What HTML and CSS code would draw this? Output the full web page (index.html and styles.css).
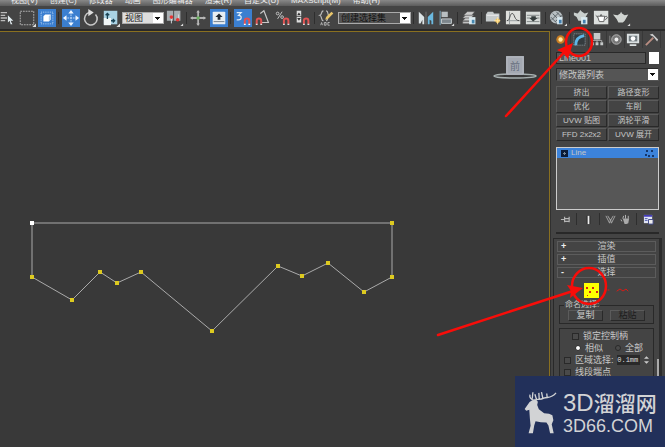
FILE: index.html
```
<!DOCTYPE html>
<html lang="zh-CN">
<head>
<meta charset="utf-8">
<title>3ds Max</title>
<link rel="stylesheet" href="styles.css">
</head>
<body>
<div class="app">
  <nav class="menu">
    <a href="#">视图(V)</a><a href="#">创建(C)</a><a href="#">修改器</a><a href="#">动画</a><a href="#">图形编辑器</a><a href="#">渲染(R)</a><a href="#">自定义(U)</a><a href="#">MAXScript(M)</a><a href="#">帮助(H)</a>
  </nav>
  <div class="toolbar">
    <button class="tool" aria-label="按名称选择"><svg viewBox="0 0 20 20"><path d="M3 4h7M3 7h5M3 10h7M3 13h5" stroke="#bbb" stroke-width="1.4"/><path d="M11 7l6 6-3 0 2 4-2 0-1-4-2 2z" fill="#e4eef2"/></svg></button>
    <button class="tool" aria-label="矩形选择区域"><svg viewBox="0 0 20 20"><rect x="2.500" y="2.500" width="15" height="15" fill="none" stroke="#bbb" stroke-dasharray="2 1"/><path d="M20 16v4h-4z" fill="#ddd"/></svg></button>
    <button class="tool on" aria-label="窗口/交叉"><svg viewBox="0 0 20 20"><rect x="3.500" y="3.500" width="13" height="13" fill="none" stroke="#bcd8f5" stroke-dasharray="1 1"/><path d="M6 8l2-2h6v6l-2 2H6z" fill="#fff"/><path d="M12 14V8l2-2v6z" fill="#b8d0e8"/></svg></button>
    <i class="sep"></i>
    <button class="tool on" aria-label="移动"><svg viewBox="0 0 20 20"><path d="M10 3v14M3 10h14" stroke="#cde4ff" stroke-dasharray="2 1"/><path d="M10 1l3 4H7zM10 19l3-4H7zM1 10l4-3v6zM19 10l-4-3v6z" fill="#eef6ff"/></svg></button>
    <button class="tool" aria-label="旋转"><svg viewBox="0 0 20 20"><path d="M15 6A7 7 0 1 1 8 4" fill="none" stroke="#c8c8c8" stroke-width="1.700"/><path d="M7 0l6 4-6 4z" fill="#ddd"/></svg></button>
    <button class="tool" aria-label="缩放"><svg viewBox="0 0 20 20"><rect x="2" y="2" width="15" height="15" fill="#a9d2e4"/><rect x="2" y="10" width="8" height="8" fill="#f0f5f6"/><path d="M6 11V5M4 7l2-2 2 2M10 13h4M12 11l2 2-2 2" fill="none" stroke="#1b4354" stroke-width="1.500"/><path d="M20 16v4h-4z" fill="#ddd"/></svg></button>
    <select class="drop view" aria-label="参考坐标系"><option>视图</option></select>
    <button class="tool" aria-label="轴点中心"><svg viewBox="0 0 20 20"><path d="M1 2h7v11H1zM9 2h7v11H9z" fill="#a7adb0"/><path d="M6 7v9M14 6v6" stroke="#d9e2e5"/><circle cx="6" cy="9" r="2" fill="#e53535"/><circle cx="13" cy="12" r="2" fill="#e53535"/><path d="M19 16v3h-3z" fill="#ddd"/></svg></button>
    <i class="sep"></i>
    <button class="tool" aria-label="选择并操纵"><svg viewBox="0 0 20 20"><path d="M9 3v14M2 10h14" stroke="#d3d3d3" stroke-width="1.500"/><path d="M9 1l2 3H7zM9 19l2-3H7zM0 10l3-2v4zM18 10l-3-2v4z" fill="#bbb"/><circle cx="9" cy="10" r="2" fill="#6bb060"/></svg></button>
    <button class="tool on" aria-label="键盘快捷键覆盖"><svg viewBox="0 0 20 20"><rect x="3" y="3" width="14" height="14" rx="1" fill="#e8eef2"/><path d="M10 5l4 4h-2.500v3h-3V9H6z" fill="#222b35"/><path d="M4 14h12" stroke="#6c7985"/></svg></button>
    <i class="sep"></i>
    <button class="tool on" aria-label="捕捉开关"><svg viewBox="0 0 20 20"><path d="M3 4h5l-3 3c4 0 4 5 0 5H3" fill="none" stroke="#e0edf8" stroke-width="1.300"/><path d="M12 17v-4a2.500 2.500 0 0 1 5 0v4" fill="none" stroke="#e55050" stroke-width="2.200"/><path d="M11 17h2M16 17h2" stroke="#fff" stroke-width="1.500"/></svg></button>
    <button class="tool" aria-label="角度捕捉"><svg viewBox="0 0 20 20"><path d="M7 5l4-3 5 13H8" fill="none" stroke="#c8c8c8" stroke-width="1.300"/><path d="M3 17v-4a2.500 2.500 0 0 1 5 0v4" fill="none" stroke="#e05353" stroke-width="2.200"/><path d="M2 17h2M7 17h2" stroke="#ddd" stroke-width="1.500"/></svg></button>
    <button class="tool" aria-label="百分比捕捉"><svg viewBox="0 0 20 20"><path d="M9 3L4 11" stroke="#ccc"/><circle cx="4" cy="5" r="1.500" fill="none" stroke="#ccc"/><circle cx="9" cy="9" r="1.500" fill="none" stroke="#ccc"/><path d="M11 17v-4a2.500 2.500 0 0 1 5 0v4" fill="none" stroke="#e05353" stroke-width="2.200"/><path d="M10 17h2M15 17h2" stroke="#ddd" stroke-width="1.500"/></svg></button>
    <button class="tool" aria-label="微调器捕捉"><svg viewBox="0 0 20 20"><path d="M3 2h5v6H3zM3 9h5v6H3z" fill="#ddd"/><path d="M5.500 4l2 3h-4zM5.500 13l2-3h-4z" fill="#333"/><path d="M11 17v-4a2.500 2.500 0 0 1 5 0v4" fill="none" stroke="#e05353" stroke-width="2.200"/><path d="M10 17h2M15 17h2" stroke="#ddd" stroke-width="1.500"/></svg></button>
    <i class="sep"></i>
    <button class="tool" aria-label="编辑命名选择集"><svg viewBox="0 0 20 20"><path d="M6 2C3 2 5 6 2 7c3 1 1 6 4 6M9 2c3 0 1 4 3 5-3 1 0 6-3 6" fill="none" stroke="#bdbdbd" stroke-width="1.300"/><path d="M8 12l1-3 6-6 2 2-6 6z" fill="#e7c56a"/><path d="M3 18l1-3 1 3M7 15v3h2v-3zM13 15h-2v3h2" fill="none" stroke="#bbb"/></svg></button>
    <select class="drop sets" aria-label="命名选择集"><option>创建选择集</option></select>
    <i class="sep"></i>
    <button class="tool" aria-label="镜像"><svg viewBox="0 0 20 20"><path d="M2 3l6 6v8H6v-5l-2 4H2z" fill="#dce3e5"/><path d="M10 3v14" stroke="#777"/><path d="M18 3l-6 6v8h2v-5l2 1v4h2z" fill="#6bb9df"/></svg></button>
    <button class="tool" aria-label="对齐"><svg viewBox="0 0 20 20"><path d="M3.500 2v16" stroke="#86b8d2"/><path d="M5 3h7v6H5z" fill="#b8bec1"/><path d="M5 11h11v5H5z" fill="#7d868c" stroke="#c9d0d3"/><path d="M19 16v3h-3z" fill="#ddd"/></svg></button>
    <i class="sep"></i>
    <button class="tool" aria-label="层管理器"><svg viewBox="0 0 20 20"><path d="M2 13l3-3h9l-3 3zM2 10l3-3h9l-3 3zM3 7l4-4h8l-3 4zM2 14h10v2H2z" fill="#ccc" stroke="#686868" stroke-width=".5"/><path d="M9 9h7v8H9z" fill="#dbe9ee"/><path d="M12 12h3v4h-3z" fill="#4688b1"/></svg></button>
    <i class="sep"></i>
    <button class="tool" aria-label="石墨工具"><svg viewBox="0 0 20 20"><path d="M1 6l2-3h6l1 2h6v9H1z" fill="#c6cbcc"/><path d="M2 7h13" stroke="#eee"/><circle cx="14" cy="13" r="2.500" fill="#f4c659"/><path d="M14 9v8M10 13h7" stroke="#ffe4a3"/></svg></button>
    <button class="tool" aria-label="曲线编辑器"><svg viewBox="0 0 20 20"><path d="M1 2h16v15H1z" fill="#dedfdc"/><path d="M5 3v14M2 13h14" stroke="#92989b"/><path d="M2 13c4 0 3-8 6-8s2 8 8 8" fill="none" stroke="#444"/></svg></button>
    <button class="tool" aria-label="图解视图"><svg viewBox="0 0 20 20"><path d="M1 3h16v14H1z" fill="#d8dcda"/><path d="M2 7h14M2 10h14M2 14h14" stroke="#7a8080"/><path d="M7 8h5v2h2l-5 4-4-4h2z" fill="#353d3d"/></svg></button>
    <i class="sep"></i>
    <button class="tool" aria-label="材质编辑器"><svg viewBox="0 0 20 20"><circle cx="8" cy="9" r="7" fill="#b8bfc2"/><path d="M4 5l8 8M8 3l6 6M2 9l6 6M3 12l8-8M7 14l7-7" stroke="#525b60"/><path d="M9 9h6v8H9z" fill="#d8e8ef"/><path d="M11 12h3v4h-3z" fill="#427fae"/><path d="M20 16v3h-3z" fill="#ddd"/></svg></button>
    <i class="sep"></i>
    <button class="tool" aria-label="渲染设置"><svg viewBox="0 0 20 20"><path d="M1 4l4 1 2-2 1-2 2 2 3 2 4-1-3 5-2 4H6L4 9 1 7z" fill="#c9cfcd"/><path d="M9 9h7v8H9z" fill="#d9e9ef"/><path d="M11 12h3v4h-3z" fill="#427fae"/></svg></button>
    <button class="tool" aria-label="渲染帧窗口"><svg viewBox="0 0 20 20"><path d="M1 2h16v15H1z" fill="#dde0de"/><path d="M5 8h8l-1 6H7zM5 9L3 7M13 9l2-1 1 2-3 2M8 8l1-2 1 2" fill="#fff" stroke="#555"/></svg></button>
    <button class="tool" aria-label="渲染产品"><svg viewBox="0 0 20 20"><path d="M0 6l5 1 3-2 1-2 1 2 3 2 4-1-4 7-2 2H6l-2-4z" fill="#d0d4d1"/><path d="M19 16v3h-3z" fill="#ddd"/></svg></button>
  </div>
  <div class="work">
    <main class="viewport">
      <svg class="canvas" role="img" aria-label="前视图样条线">
        <path d="M32 191H392V245L364 260 328 231 302 244 278 234 212 299 141 240 117 251 100 240 72 268 32 245Z" fill="none" stroke="#aaa"/>
        <path d="M390 189h4v4h-4zM390 243h4v4h-4zM362 258h4v4h-4zM326 229h4v4h-4zM300 242h4v4h-4zM276 232h4v4h-4zM210 297h4v4h-4zM139 238h4v4h-4zM115 249h4v4h-4zM98 238h4v4h-4zM70 266h4v4h-4zM30 243h4v4h-4z" fill="#ddca20"/>
        <path d="M30 189h4v4h-4z" fill="#fff"/>
        <ellipse cx="515" cy="44" rx="21" ry="2" fill="none" stroke="#a7b0b0" stroke-width="1.500"/>
        <path d="M506 24h18v19h-18z" fill="#a4a9b2"/><path d="M507 25h16v17h-16z" fill="none" stroke="#b5b9c0"/>
        <text class="cube" x="510" y="38">前</text>
      </svg>
    </main>
    <aside class="panel">
      <div class="tabs">
        <button class="tab" aria-label="创建"><svg viewBox="0 0 18 18"><circle cx="8" cy="9" r="4.500" fill="#c77c22"/><circle cx="8" cy="9" r="2.300" fill="#ffe9a0"/></svg></button>
        <button class="tab" aria-label="修改"><svg viewBox="0 0 18 18"><path d="M3 3h12v12H3z" fill="#353b3e" stroke="#8d9da5" stroke-dasharray="1 1"/><path d="M5 15C5 9 8 6 14 5" fill="none" stroke="#5fb6e6" stroke-width="3"/></svg></button>
        <button class="tab" aria-label="层次"><svg viewBox="0 0 18 18"><path d="M5 2h7v7H5zM2 12h3v3H2zM7 12h3v3H7zM12 12h3v3h-3z" fill="#c5c9c9"/><path d="M8.500 9v4M3.500 12v-2h10v2" fill="none" stroke="#aaa"/></svg></button>
        <button class="tab" aria-label="运动"><svg viewBox="0 0 18 18"><circle cx="10" cy="9" r="5" fill="#777" stroke="#b5b5b5"/><circle cx="10" cy="9" r="2" fill="#eee"/><path d="M3 5v8" stroke="#888"/></svg></button>
        <button class="tab" aria-label="显示"><svg viewBox="0 0 18 18"><path d="M2 3h13v10H2zM5 14h7v2H5z" fill="#dce1e2"/><path d="M4 5h9v6H4z" fill="#727b80"/><circle cx="8.500" cy="8" r="2.500" fill="#fff"/></svg></button>
        <button class="tab" aria-label="工具"><svg viewBox="0 0 18 18"><path d="M3 15l8-8" stroke="#b98d82" stroke-width="2"/><path d="M7 4l3-1 6 6-1 2-4-5z" fill="#ccc"/></svg></button>
      </div>
      <div class="object"><input class="name" aria-label="对象名称" value="Line001"><button class="swatch" aria-label="颜色"></button></div>
      <select class="drop modifiers" aria-label="修改器列表"><option>修改器列表</option></select>
      <div class="mods"><button>挤出</button><button>路径变形</button><button>优化</button><button>车削</button><button>UVW 贴图</button><button>涡轮平滑</button><button>FFD 2x2x2</button><button>UVW 展开</button></div>
      <div class="stack"><button class="entry"><svg class="plus" viewBox="0 0 7 7"><path d="M0 0h7v7H0z" fill="#0b1b38"/><path d="M2 3.500h3M3.500 2v3" stroke="#789"/></svg><span>Line</span><svg class="dots" viewBox="0 0 9 7"><path d="M1 0h2v2H1zM6 0h2v2H6zM0 4h2v2H0zM3 5h2v2H3zM7 5h2v2H7z" fill="#14366b"/></svg></button></div>
      <div class="stack-tools">
        <button aria-label="锁定堆栈"><svg viewBox="0 0 12 12"><path d="M1 6h4M5 3v6M10 3v6M5 5h5v3H5" fill="none" stroke="#b5b5b5" stroke-width="1.300"/></svg></button><i class="sep"></i>
        <button aria-label="显示最终结果"><svg viewBox="0 0 12 12"><path d="M4 2h4v9H4z" fill="#222"/><path d="M6 2v9" stroke="#eee" stroke-width="2"/></svg></button><i class="sep"></i>
        <button aria-label="使唯一"><svg viewBox="0 0 12 12"><path d="M1 2l4 8 1-4 1 4 4-8M3 2l3 5 3-5" fill="none" stroke="#aaa"/></svg></button>
        <button aria-label="移除修改器"><svg viewBox="0 0 12 12"><path d="M3 5h7l-1 5-2 1H5z" fill="#aaa"/><path d="M3 5l1-3M6 5V1M9 5V2M2 8L1 6" stroke="#bbb"/></svg></button><i class="sep"></i>
        <button aria-label="配置修改器集"><svg viewBox="0 0 12 12"><path d="M1 1h9v9H1z" fill="#dfe3f4"/><path d="M1 2h9" stroke="#433bb9" stroke-width="2"/><path d="M2 5h3M2 7h3" stroke="#4b54aa"/><path d="M6 6h5v5H6z" fill="#eee" stroke="#3c4585"/></svg></button>
      </div>
      <div class="rollouts">
        <button class="rollout"><b>+</b>渲染</button>
        <button class="rollout"><b>+</b>插值</button>
        <button class="rollout"><b>-</b>选择</button>
        <div class="sub"><button class="vertex" aria-label="顶点"><svg viewBox="0 0 15 15"><path d="M2 4h2v2H2zM8 4h2v2H8zM5 8h2v2H5zM12 8h2v2h-2zM3 12h1v1H3z" fill="#d42414"/></svg></button></div>
        <fieldset class="named"><legend>命名选择:</legend><button>复制</button><button class="off">粘贴</button></fieldset>
        <div class="group">
          <label class="lock"><input type="checkbox">锁定控制柄</label>
          <div class="radios"><label><input type="radio" name="mode" checked>相似</label><label><input type="radio" name="mode">全部</label></div>
          <div class="area"><label><input type="checkbox">区域选择:</label><input class="num" aria-label="区域" value="0.1mm"><svg class="spin" viewBox="0 0 6 9"><path d="M3 0l3 3H0zM3 9l3-3H0z" fill="#ccc"/></svg></div>
          <label><input type="checkbox">线段端点</label>
        </div>
        <i class="thumb"></i>
      </div>
    </aside>
  </div>
  <svg class="marks" viewBox="0 0 665 447" aria-hidden="true">
    <g fill="none" stroke="#f80d09" stroke-width="2.500" stroke-linecap="round">
      <ellipse cx="579" cy="42" rx="13" ry="14"/><path d="M506 116L568 48"/>
      <ellipse cx="589" cy="286" rx="17" ry="18"/><path d="M438 335L576 290"/>
      <path d="M608 290h1M617 291l3-2 3 2 3-2 2 2" stroke="#d61c17" stroke-width="1"/>
    </g>
    <path d="M573 43L557 50 563 53 568 59zM583 288L567 285 571 291 570 298z" fill="#f80d09"/>
  </svg>
  <div class="brand">
    <svg class="deer" viewBox="40 60 100 135"><path d="M42 117L57 96 65 90 77 89 82 95 80 105 85 118 101 130 116 131 126 136 129 151 124 163 130 190H119L114 167 108 158 91 157 75 154 71 167 67 190H54L60 168 58 148 56 119 47 122z" fill="#d2d3d5"/><path d="M71 91C62 88 56 83 58 73M65 86L67 66M71 90C80 86 90 90 100 84 113 80 123 85 137 68M78 88L73 72M86 86L85 68M97 84L93 66M110 81L109 70" fill="none" stroke="#d2d3d5" stroke-width="4"/></svg>
    <div class="words"><div class="big"><span>3D</span>溜溜网</div><div class="site">3D66.COM</div></div>
  </div>
</div>
</body>
</html>
```
FILE: styles.css
```
* { box-sizing: border-box; }
body {
  margin: 0;
  background: #444;
  color: #c6c6c6;
  font: 9px/12px "Liberation Sans", "Noto Sans CJK SC", sans-serif;
}
button, input, select { font: inherit; color: inherit; margin: 0; padding: 0; border: 0; border-radius: 0; }
button { background: none; }
svg { display: block; }

.app { position: relative; display: flex; flex-direction: column; height: 100vh; overflow: hidden; }

.menu {
  display: flex;
  flex: none;
  align-items: flex-end;
  gap: 12px;
  height: 6px;
  padding-left: 11px;
  overflow: hidden;
  background: linear-gradient(#888, #5c5c5c);
  font-size: 8px;
  line-height: 10px;
  white-space: nowrap;
}
.menu a { color: #eee; text-decoration: none; }

.toolbar {
  display: flex;
  flex: none;
  align-items: center;
  height: 25px;
  border-bottom: 2px solid #292929;
  background: #444;
}
.tool { flex: none; width: 20px; height: 20px; padding: 1px; }
.tool:first-child { margin-left: -3px; }
.tool svg { width: 18px; height: 18px; }
.tool.on { background: #3b7fd0; background-clip: content-box; }
.sep { flex: none; width: 4px; height: 12px; border-left: 1px solid #2e2e2e; margin-left: 1px; margin-right: -1px; }

.drop {
  flex: none;
  appearance: none;
  height: 12px;
  padding-left: 2px;
  border: 1px solid #aaa;
  line-height: 10px;
  background-color: #555;
  background-image:
    linear-gradient(#111, #111), linear-gradient(#111, #111), linear-gradient(#111, #111), linear-gradient(#fff, #fff);
  background-size: 5px 1px, 3px 1px, 1px 1px, 10px 100%;
  background-position: right 3px top 4px, right 4px top 5px, right 5px top 6px, right;
  background-repeat: no-repeat;
}
.drop.view { width: 42px; margin: 0 1px; background-color: #ddd; color: #222; }
.drop.sets { width: 73px; margin: 0 1px; color: #111; }

.work { display: flex; flex: 1; min-height: 0; }
.viewport { flex: 1; min-width: 0; border-top: 1px solid #8a7020; border-right: 1px solid #8a7020; background: #393939; }
.canvas { width: 100%; height: 100%; }
.cube { font-size: 10px; fill: #687080; }

.panel {
  display: flex;
  flex: none;
  flex-direction: column;
  width: 115px;
  padding: 0 6px 0 5px;
  border-left: 1px solid #303030;
}
.tabs { display: grid; grid-template-columns: repeat(6, 1fr); height: 17px; margin: 0 2px 4px -3px; }
.tab { border-right: 1px solid #383838; }
.tab svg { width: 17px; height: 17px; }
.object { display: flex; gap: 3px; height: 12px; margin-bottom: 4px; }
.name { flex: 1; min-width: 0; padding-left: 2px; border: 1px solid #292929; background: #555; line-height: 10px; }
.swatch { width: 10px; background: #fff; }
.modifiers { width: 100%; height: 13px; margin-bottom: 5px; border-color: #292929 #555 #555 #292929; }
.mods { display: grid; grid-template-columns: 1fr 1fr; gap: 1px; margin-bottom: 6px; }
.mods button { height: 13px; border: 1px solid; border-color: #5b5b5b #292929 #292929 #5b5b5b; line-height: 11px; font-size: 8px; white-space: nowrap; }
.stack { height: 63px; border: 1px solid #ccc; background: #575757; }
.entry { display: flex; align-items: center; gap: 3px; width: 100%; height: 10px; padding: 0 4px; background: #3c83db; font-size: 8px; line-height: 10px; }
.plus { width: 7px; height: 7px; }
.dots { width: 9px; height: 7px; margin-left: auto; }
.stack-tools { display: flex; align-items: center; justify-content: space-between; height: 24px; padding: 0 5px 4px 4px; border-bottom: 2px solid #282828; }
.stack-tools svg { width: 11px; height: 11px; }

.rollouts {
  position: relative;
  display: flex;
  flex: 1;
  flex-direction: column;
  min-height: 0;
  margin: 4px -3px 0 -3px;
  padding: 2px 3px 0 3px;
  overflow: hidden;
  border: 1px solid #292929;
  border-right: 3px solid #2c2c2c;
}
.rollout { position: relative; flex: none; height: 11px; margin-bottom: 2px; border: 1px solid #5c5c5c; line-height: 9px; }
.rollout b { position: absolute; left: 3px; color: #eee; }
.sub { display: flex; flex: none; justify-content: center; height: 20px; padding-top: 3px; margin-right: 30px; }
.vertex { width: 15px; height: 15px; background: #ff0; }
.named { display: flex; flex: none; gap: 7px; justify-content: flex-end; height: 24px; min-width: 0; margin: 0 2px 4px; padding: 0 8px; border: 1px solid #292929; }
.named legend { margin-left: -4px; padding: 0 1px; font-size: 8px; line-height: 10px; }
.named button { flex: 1; height: 11px; border: 1px solid; border-color: #5b5b5b #292929 #292929 #5b5b5b; line-height: 9px; }
.named .off { color: #1c1c1c; }
.group { display: flex; flex: none; flex-direction: column; height: 130px; margin: 0 2px; padding: 1px 4px; border: 1px solid #292929; font-size: 9px; line-height: 12px; white-space: nowrap; }
.group label { display: flex; align-items: center; gap: 4px; }
.lock, .radios { margin-left: 8px; }
.radios, .area { display: flex; align-items: center; }
.radios { gap: 12px; padding-left: 3px; }
.area { justify-content: space-between; }
.group input[type] { flex: none; appearance: none; width: 7px; height: 7px; border: 1px solid #292929; background: #4a4a4a; }
.group input[type="radio"] { width: 6px; height: 6px; border-radius: 50%; }
.group input[type="radio"]:checked { background: #fff; }
.num { width: 23px; height: 10px; background: #292929; font: 7px/10px "Liberation Mono", monospace; color: #ddd; }
.spin { width: 5px; height: 8px; }
.thumb { position: absolute; right: 0; top: 120px; bottom: 0; width: 2px; background: #aaa; }

.marks { position: absolute; top: 0; right: 0; width: 665px; height: 447px; pointer-events: none; }
.brand {
  position: absolute;
  right: 0;
  bottom: 0;
  display: flex;
  align-items: flex-start;
  gap: 6px;
  width: 150px;
  height: 71px;
  padding: 14px 8px 0 9px;
  background: #22305a;
  color: #d2d3d5;
}
.deer { flex: none; width: 33px; height: 45px; }
.words { white-space: nowrap; }
.big { font-size: 21px; line-height: 26px; font-weight: 500; }
.big span { font-size: 24px; }
.site { font-size: 18px; line-height: 18px; }
```
